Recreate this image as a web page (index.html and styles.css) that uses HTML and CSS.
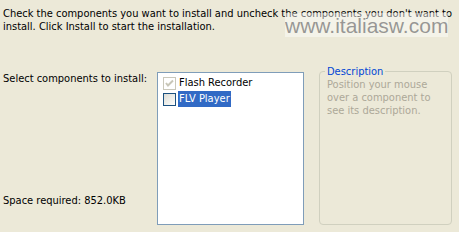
FILE: index.html
```html
<!DOCTYPE html>
<html>
<head>
<meta charset="utf-8">
<link rel="stylesheet" href="styles.css">
</head>
<body>
<div class="page">
  <p class="intro">Check the components you want to install and uncheck the components you don't want to install. Click Install to start the installation.</p>
  <div class="watermark">www.italiasw.com</div>
  <div class="main">
    <div class="left">
      <div class="label">Select components to install:</div>
      <div class="label space">Space required: 852.0KB</div>
    </div>
    <div class="tree">
      <div class="row">
        <span class="cb cb-disabled">
          <svg width="13" height="13" viewBox="0 0 13 13"><path d="M3 6 L5 8.5 L10 3.5" fill="none" stroke="#c8c6b8" stroke-width="2"/></svg>
        </span>
        <span class="item">Flash Recorder</span>
      </div>
      <div class="row">
        <span class="cb cb-normal"></span>
        <span class="item selected">FLV Player</span>
      </div>
    </div>
    <div class="group">
      <div class="legend">Description</div>
      <div class="desc">Position your mouse over a component to see its description.</div>
    </div>
  </div>
</div>
</body>
</html>
```
FILE: styles.css
```css
html, body {
  margin: 0;
  padding: 0;
  background: #ece9d8;
}
.page {
  position: relative;
  width: 459px;
  height: 232px;
  font-family: "DejaVu Sans Condensed", "DejaVu Sans", sans-serif;
  font-size: 11px;
  line-height: 13px;
  color: #000;
}
.intro {
  margin: 0;
  padding: 7px 0 0 3px;
  width: 452px;
}
.watermark {
  position: absolute;
  left: 285px;
  top: 13px;
  width: 163px;
  height: 24px;
  overflow: hidden;
  background: rgba(255, 255, 255, 0.45);
  color: rgba(120, 120, 120, 0.75);
  font-family: "Liberation Sans", Arial, sans-serif;
  font-size: 21px;
  line-height: 26px;
  text-align: center;
}
.main {
  display: flex;
  margin-top: 39px;
}
.left {
  width: 157px;
  height: 153px;
  display: flex;
  flex-direction: column;
  justify-content: space-between;
  padding-left: 3px;
  box-sizing: border-box;
}
.space {
  margin-bottom: 18px;
}
.tree {
  width: 147px;
  height: 153px;
  box-sizing: border-box;
  border: 1px solid #7f9db9;
  background: #fff;
  padding: 2px 0 0 5px;
}
.row {
  display: flex;
  align-items: center;
  height: 16px;
}
.cb {
  width: 13px;
  height: 13px;
  box-sizing: border-box;
  display: block;
  flex: none;
}
.cb svg { display: block; margin: -1px; }
.cb-disabled {
  border: 1px solid #cac8bb;
  background: #fff;
}
.cb-normal {
  border: 1px solid #1c5180;
  background: linear-gradient(135deg, #dcdcd7 0%, #f4f4f0 70%, #fff 100%);
}
.item {
  margin-left: 2px;
  padding: 1px 1px 2px 1px;
  line-height: 13px;
}
.selected {
  background: #316ac5;
  color: #fff;
}
.group {
  margin-left: 15px;
  margin-top: -1px;
  width: 133px;
  height: 154px;
  box-sizing: border-box;
  border: 1px solid #d0d0bf;
  border-radius: 4px;
  position: relative;
  padding: 6px 0 0 7px;
}
.legend {
  position: absolute;
  top: -7px;
  left: 5px;
  padding: 0 2px;
  background: #ece9d8;
  color: #0046d5;
}
.desc {
  width: 112px;
  color: #aca899;
}
```
